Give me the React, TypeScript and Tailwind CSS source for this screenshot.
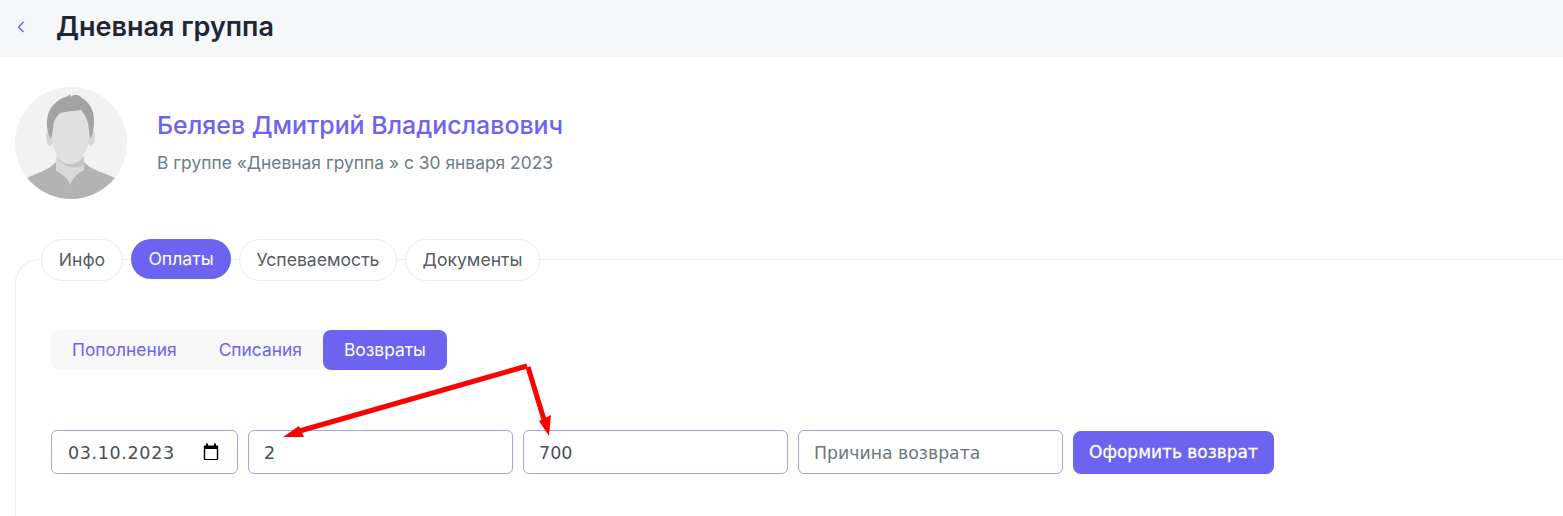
import React from "react";

const inputCls =
  "h-[44px] rounded-[6px] border border-[#a79ff5] bg-white pt-[2px] text-[17.5px] text-[#495057] outline-none placeholder:text-[#6b7780] [font-family:'DejaVu_Sans',sans-serif]";

function Avatar() {
  return (
    <svg width="112" height="112" viewBox="0 0 112 112" className="shrink-0">
      <defs>
        <clipPath id="c">
          <circle cx="56" cy="56" r="56" />
        </clipPath>
      </defs>
      <circle cx="56" cy="56" r="56" fill="#f2f2f2" />
      <g clipPath="url(#c)">
        <path d="M12 91 C22 86 34 83 41 75 L69 75 C76 83 90 86 100 91 L112 112 L0 112 Z" fill="#b3b3b3" />
        <path d="M41 70 L69 70 L69 83 C63 86 58 90 55 98 C53 91 47 87 41 84 Z" fill="#d9d9d9" />
        <path d="M43 72 C50 80 60 83 69 78 L69 70 L43 70 Z" fill="#c4c4c4" />
        <ellipse cx="35" cy="50" rx="4" ry="9" fill="#d6d6d6" />
        <ellipse cx="76" cy="50" rx="4" ry="9" fill="#d6d6d6" />
        <path d="M36 36 C36 24 46 20 56 20 C66 20 75 24 75 36 C75 54 72 64 66 72 C60 79 50 79 44 72 C38 64 36 54 36 36 Z" fill="#e0e0e0" />
        <path d="M36 52 C31 44 30 30 36 21 C40 15 46 11 51 10 C53 9 54 8 55 7 L56 10 C59 7 63 7 67 11 C73 14 79 22 79 33 C79 41 78 47 75 52 C74 45 74 38 72 33 C70 28 68 25 66 23 C60 24 48 24 44 27 C40 31 38 36 38 42 C37 46 37 49 36 52 Z" fill="#a3a3a3" />
      </g>
    </svg>
  );
}

function Tab({ label, active, w, h = 42 }: { label: string; active?: boolean; w: number; h?: number }) {
  return (
    <button
      style={{ width: w, height: h }}
      className={
        active
          ? "rounded-[20px] bg-[#6c63f0] text-[17.6px] text-white"
          : "rounded-[21px] border border-[#e9edf4] bg-white text-[17.6px] text-[#585c63]"
      }
    >
      {label}
    </button>
  );
}

export default function App() {
  return (
    <div className="relative h-[516px] w-[1563px] overflow-hidden bg-white [font-family:Inter,sans-serif]">
      <header className="flex h-[57px] items-center bg-[#f6f7f9] pl-[16px]">
        <svg width="10" height="14" viewBox="0 0 10 14" fill="none" className="mt-[-3px]">
          <path d="M7.5 2 L2.5 7 L7.5 12" stroke="#6c63f0" strokeWidth="1.4" />
        </svg>
        <h1 className="ml-[30px] mt-[-5px] text-[27px] font-semibold leading-none text-[#212636]">Дневная группа</h1>
      </header>

      <section className="flex items-center pl-[15px] pt-[30px]">
        <Avatar />
        <div className="ml-[30px] mt-[-5px]">
          <div className="text-[24.9px] font-medium leading-[32px] text-[#6c63f0]">Беляев Дмитрий Владиславович</div>
          <div className="mt-[12px] text-[17.4px] leading-[20px] text-[#6e7c87]">
            В группе «Дневная группа » с 30 января 2023
          </div>
        </div>
      </section>

      <section className="ml-[15px] mt-[60px] h-[300px] rounded-tl-[24px] border-l border-t border-[#e9edf4]">
        <div className="-mt-[21px] flex items-start gap-[8px] pl-[25px]">
          <Tab label="Инфо" w={82} />
          <Tab label="Оплаты" w={100} h={40} active />
          <Tab label="Успеваемость" w={158} />
          <Tab label="Документы" w={135} />
        </div>

        <div className="ml-[35px] mt-[49px] flex h-[40px] w-[396px] items-center rounded-[8px] bg-[#f8f8f8] text-[17.4px] text-[#6c63f0]">
          <span className="ml-[21px]">Пополнения</span>
          <span className="ml-[42px]">Списания</span>
          <span className="ml-[21px] flex h-[40px] w-[124px] items-center justify-center rounded-[8px] bg-[#6c63f0] text-white">
            Возвраты
          </span>
        </div>

        <div className="ml-[35px] mt-[60px] flex items-center gap-[10px]">
          <div className="relative">
            <input readOnly value="03.10.2023" className={inputCls + " w-[187px] px-[16px] tracking-[0.65px]"} />
            <svg width="16" height="18" viewBox="0 0 16 18" className="absolute left-[152px] top-[13px]">
              <path d="M3 0.5 h2 v2 h6 v-2 h2 v2 h1.2 a1 1 0 0 1 1 1 v12.5 a1 1 0 0 1 -1 1 H1.8 a1 1 0 0 1 -1 -1 V3.5 a1 1 0 0 1 1 -1 H3 Z M2.2 6 v10 h11.6 V6 Z" fill="#000" />
            </svg>
          </div>
          <input readOnly value="2" className={inputCls + " w-[265px] px-[15px]"} />
          <input readOnly value="700" className={inputCls + " w-[265px] px-[15px]"} />
          <input readOnly placeholder="Причина возврата" className={inputCls + " w-[265px] px-[15px] placeholder:text-[17.3px]"} />
          <button className="mt-[1px] h-[43px] w-[201px] rounded-[8px] bg-[#6c63f0] text-[17px] text-white [font-family:'DejaVu_Sans',sans-serif]">
            <span className="[-webkit-text-stroke:0.3px_white]">Оформить возврат</span>
          </button>
        </div>
      </section>

      <svg width="300" height="100" viewBox="0 0 300 100" className="pointer-events-none absolute left-[270px] top-[355px]">
        <path d="M257 11 L26 77" stroke="#ff0000" strokeWidth="5" fill="none" />
        <path d="M13 82 L29 71 L34 82 Z" fill="#ff0000" />
        <path d="M258 12 L275 68" stroke="#ff0000" strokeWidth="5" fill="none" />
        <path d="M279 81 L269 66 L281 60 Z" fill="#ff0000" />
      </svg>
    </div>
  );
}
